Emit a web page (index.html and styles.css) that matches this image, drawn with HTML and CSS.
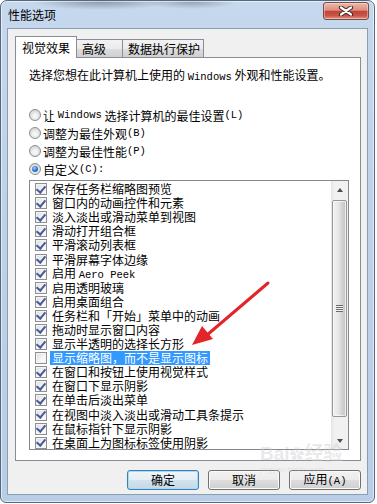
FILE: index.html
```html
<!DOCTYPE html>
<html lang="zh-CN">
<head>
    <meta charset="UTF-8">
    <meta name="viewport" content="width=device-width, initial-scale=1.0">
    <title>性能选项</title>
    <link rel="stylesheet" href="styles.css">
</head>
<body>
    <div class="window">
        <div class="titlebar">
            <span class="title">性能选项</span>
            <button class="close" type="button">
                <svg width="16" height="10" viewBox="0 0 16 10">
                    <path d="M3 1.5 L13 8.5 M13 1.5 L3 8.5" stroke="#3a2622" stroke-width="4.2" stroke-linecap="round" />
                    <path d="M3 1.5 L13 8.5 M13 1.5 L3 8.5" stroke="#ffffff" stroke-width="2.2" stroke-linecap="round" />
                </svg>
            </button>
        </div>
        <div class="client">
            <div class="tabs">
                <div class="tab active">视觉效果</div>
                <div class="tab">高级</div>
                <div class="tab">数据执行保护</div>
            </div>
            <div class="panel">
                <p class="intro">选择您想在此计算机上使用的 <span class="en">Windows</span> 外观和性能设置。</p>
                <div class="radios">
                    <div class="radio"><span class="rb"></span>让 <span class="en">Windows</span> 选择计算机的最佳设置<span class="en">(L)</span></div>
                    <div class="radio"><span class="rb"></span>调整为最佳外观<span class="en">(B)</span></div>
                    <div class="radio"><span class="rb"></span>调整为最佳性能<span class="en">(P)</span></div>
                    <div class="radio"><span class="rb on"></span>自定义<span class="en">(C):</span></div>
                </div>
                <div class="listbox">
                    <ul class="items">
                        <li><span class="cb on"></span><span class="txt">保存任务栏缩略图预览</span></li>
                        <li><span class="cb on"></span><span class="txt">窗口内的动画控件和元素</span></li>
                        <li><span class="cb on"></span><span class="txt">淡入淡出或滑动菜单到视图</span></li>
                        <li><span class="cb on"></span><span class="txt">滑动打开组合框</span></li>
                        <li><span class="cb on"></span><span class="txt">平滑滚动列表框</span></li>
                        <li><span class="cb on"></span><span class="txt">平滑屏幕字体边缘</span></li>
                        <li><span class="cb on"></span><span class="txt">启用 <span class="en">Aero Peek</span></span></li>
                        <li><span class="cb on"></span><span class="txt">启用透明玻璃</span></li>
                        <li><span class="cb on"></span><span class="txt">启用桌面组合</span></li>
                        <li><span class="cb on"></span><span class="txt">任务栏和「开始」菜单中的动画</span></li>
                        <li><span class="cb on"></span><span class="txt">拖动时显示窗口内容</span></li>
                        <li><span class="cb on"></span><span class="txt">显示半透明的选择长方形</span></li>
                        <li><span class="cb"></span><span class="txt hl">显示缩略图，而不是显示图标</span></li>
                        <li><span class="cb on"></span><span class="txt">在窗口和按钮上使用视觉样式</span></li>
                        <li><span class="cb on"></span><span class="txt">在窗口下显示阴影</span></li>
                        <li><span class="cb on"></span><span class="txt">在单击后淡出菜单</span></li>
                        <li><span class="cb on"></span><span class="txt">在视图中淡入淡出或滑动工具条提示</span></li>
                        <li><span class="cb on"></span><span class="txt">在鼠标指针下显示阴影</span></li>
                        <li><span class="cb on"></span><span class="txt">在桌面上为图标标签使用阴影</span></li>
                    </ul>
                    <div class="scrollbar">
                        <div class="sb-btn"><span class="tri up"></span></div>
                        <div class="track">
                            <div class="thumb"><span class="grip"></span></div>
                        </div>
                        <div class="sb-btn"><span class="tri down"></span></div>
                    </div>
                </div>
            </div>
            <div class="buttons">
                <button class="btn default" type="button">确定</button>
                <button class="btn" type="button">取消</button>
                <button class="btn" type="button">应用<span class="en">(A)</span></button>
            </div>
        </div>
    </div>

    <div class="watermark">Bai<span class="paw">&#10047;</span>经验<small>jingyan.baidu.com</small></div>

    <svg class="pointer" width="377" height="504" viewBox="0 0 377 504">
        <path d="M268 283 L207 335" stroke="#e3252a" stroke-width="3" stroke-linecap="round" />
        <polygon points="192,345 202,326 213,339" fill="#e3252a" />
    </svg>
</body>
</html>
```

FILE: styles.css
```css
* {
    box-sizing: border-box;
}

body {
    margin: 0;
    background: #fff;
    font-family: "Noto Sans CJK SC", "Noto Sans", sans-serif;
    font-size: 12px;
    color: #000;
}

.en {
    font-family: "Liberation Mono", "Noto Sans CJK SC", monospace;
    font-size: 10.5px;
}

.window {
    width: 375px;
    height: 503px;
    display: flex;
    flex-direction: column;
    padding: 0 6px 7px 6px;
    border: 1px solid #56687e;
    border-radius: 7px 7px 6px 6px;
    background:
        radial-gradient(ellipse 70px 9px at 100px 0, rgba(60, 70, 85, .45), transparent),
        radial-gradient(ellipse 45px 7px at 190px 1px, rgba(60, 70, 85, .35), transparent),
        linear-gradient(#c6d8ed, #bfd3ea 30%, #b8cde6);
    box-shadow: inset 0 0 0 1px rgba(255, 255, 255, .55);
}

.titlebar {
    height: 27px;
    display: flex;
    justify-content: space-between;
    align-items: flex-start;
}

.title {
    margin-left: 1px;
    line-height: 27px;
}

.close {
    width: 46px;
    height: 18px;
    margin-top: 1px;
    margin-right: -1px;
    padding: 0;
    display: flex;
    align-items: center;
    justify-content: center;
    border: 1px solid #7a4b44;
    border-radius: 3px;
    background: linear-gradient(#ecb8aa, #dc8e7f 45%, #c34537 52%, #c85546 80%, #e59b88);
    box-shadow: inset 0 0 0 1px rgba(255, 255, 255, .35);
}

.client {
    flex: 1;
    display: flex;
    flex-direction: column;
    background: #f0f0f0;
    border: 1px solid #8b9db3;
    padding: 7px 6px 0 7px;
}

.tabs {
    height: 21px;
    display: flex;
    align-items: flex-end;
}

.tab {
    height: 18px;
    line-height: 17px;
    padding: 0 5px;
    margin-left: -1px;
    white-space: nowrap;
    border: 1px solid #898c95;
    border-bottom: none;
    background: linear-gradient(#f2f2f2, #ebebeb 50%, #dddddd 51%, #cfcfcf);
}

.tab.active {
    position: relative;
    z-index: 1;
    width: 62px;
    height: 22px;
    line-height: 22px;
    padding: 0 6px;
    margin-left: 0;
    margin-bottom: -1px;
    background: #fff;
}

.tab:nth-child(2) {
    width: 47px;
}

.tab:nth-child(3) {
    width: 82px;
}

.panel {
    height: 404px;
    flex-shrink: 0;
    background: #fff;
    border: 1px solid #898c95;
    padding: 10px 12px 0 13px;
}

.intro {
    margin: 0 0 22px;
    line-height: 14px;
}

.radio {
    height: 18px;
    display: flex;
    align-items: center;
    white-space: pre;
}

.rb {
    width: 12px;
    height: 12px;
    margin-right: 2px;
    border-radius: 50%;
    border: 1px solid #8b8e92;
    background: radial-gradient(circle at 50% 60%, #f6f6f6 20%, #d4d4d4 75%, #eeeeee);
    display: flex;
    align-items: center;
    justify-content: center;
}

.rb.on::after {
    content: "";
    width: 6px;
    height: 6px;
    border-radius: 50%;
    background: radial-gradient(circle at 40% 35%, #9fd0ff, #2b6fc8 55%, #143e82);
}

.listbox {
    margin-top: 2px;
    width: 320px;
    height: 270px;
    display: flex;
    border: 1px solid #828790;
    background: #fff;
}

.items {
    flex: 1;
    list-style: none;
    margin: 0;
    padding: 1px 0 0 5px;
}

.items li {
    height: 14.1px;
    line-height: 14px;
    display: flex;
    align-items: center;
    white-space: pre;
}

.cb {
    width: 12px;
    height: 12px;
    margin-right: 5px;
    border: 1px solid #8e8f8f;
    background: linear-gradient(135deg, #dcdcdc, #f6f6f6 60%, #ffffff);
    box-shadow: inset 0 0 0 1px #f4f4f4;
    display: flex;
    align-items: center;
    justify-content: center;
}

.cb.on::after {
    content: "";
    width: 4px;
    height: 7px;
    margin-top: -2px;
    border-right: 2px solid #4a5c98;
    border-bottom: 2px solid #4a5c98;
    transform: rotate(40deg);
}

.txt {
    line-height: 14px;
}

.hl {
    margin-left: -2px;
    padding: 0 2px;
    background: #3399ff;
    color: #fff;
}

.scrollbar {
    width: 17px;
    display: flex;
    flex-direction: column;
    background: linear-gradient(to right, #e4e4e4, #f1f1f1 20%, #f1f1f1);
}

.sb-btn {
    height: 17px;
    display: flex;
    align-items: center;
    justify-content: center;
}

.tri {
    width: 0;
    height: 0;
    border-left: 3.5px solid transparent;
    border-right: 3.5px solid transparent;
}

.tri.up {
    border-bottom: 4px solid #4d4d4d;
}

.tri.down {
    border-top: 4px solid #4d4d4d;
}

.track {
    flex: 1;
    padding: 2px 1px 0 1px;
}

.thumb {
    height: 217px;
    border: 1px solid #979797;
    border-radius: 2px;
    background: linear-gradient(to right, #f0f0f0, #e8e8e8 40%, #d8d8d8 60%, #c8c8c8 90%, #e6e6e6);
    box-shadow: inset 0 0 0 1px rgba(255, 255, 255, .6);
    display: flex;
    align-items: center;
    justify-content: center;
}

.grip {
    width: 7px;
    height: 7px;
    background: repeating-linear-gradient(#6a6a6a 0 1px, #f4f4f4 1px 2px);
}

.buttons {
    display: flex;
    justify-content: flex-end;
    gap: 9px;
    margin-top: 9px;
}

.btn {
    width: 72px;
    height: 20px;
    padding: 0;
    font-family: inherit;
    font-size: 12px;
    line-height: 1;
    color: #000;
    border: 1px solid #707070;
    border-radius: 3px;
    background: linear-gradient(#f2f2f2, #ebebeb 50%, #dddddd 51%, #cfcfcf);
    box-shadow: inset 0 0 0 1px #fbfbfb;
}

.btn.default {
    border-color: #3c7fb1;
    background: linear-gradient(#eef5fa, #e4eef5 50%, #d3e3ee 51%, #c5d8e6);
    box-shadow: inset 0 0 0 1px #a9dbf6;
}

.watermark {
    position: absolute;
    left: 260px;
    top: 444px;
    font-family: "Liberation Sans", "Noto Sans CJK SC", sans-serif;
    font-size: 19px;
    font-weight: bold;
    color: rgba(205, 205, 205, .45);
    line-height: 20px;
    pointer-events: none;
}

.watermark .paw {
    font-size: 15px;
}

.watermark small {
    display: block;
    font-size: 8px;
    font-weight: normal;
    line-height: 10px;
}

.pointer {
    position: absolute;
    left: 0;
    top: 0;
    pointer-events: none;
}
```
